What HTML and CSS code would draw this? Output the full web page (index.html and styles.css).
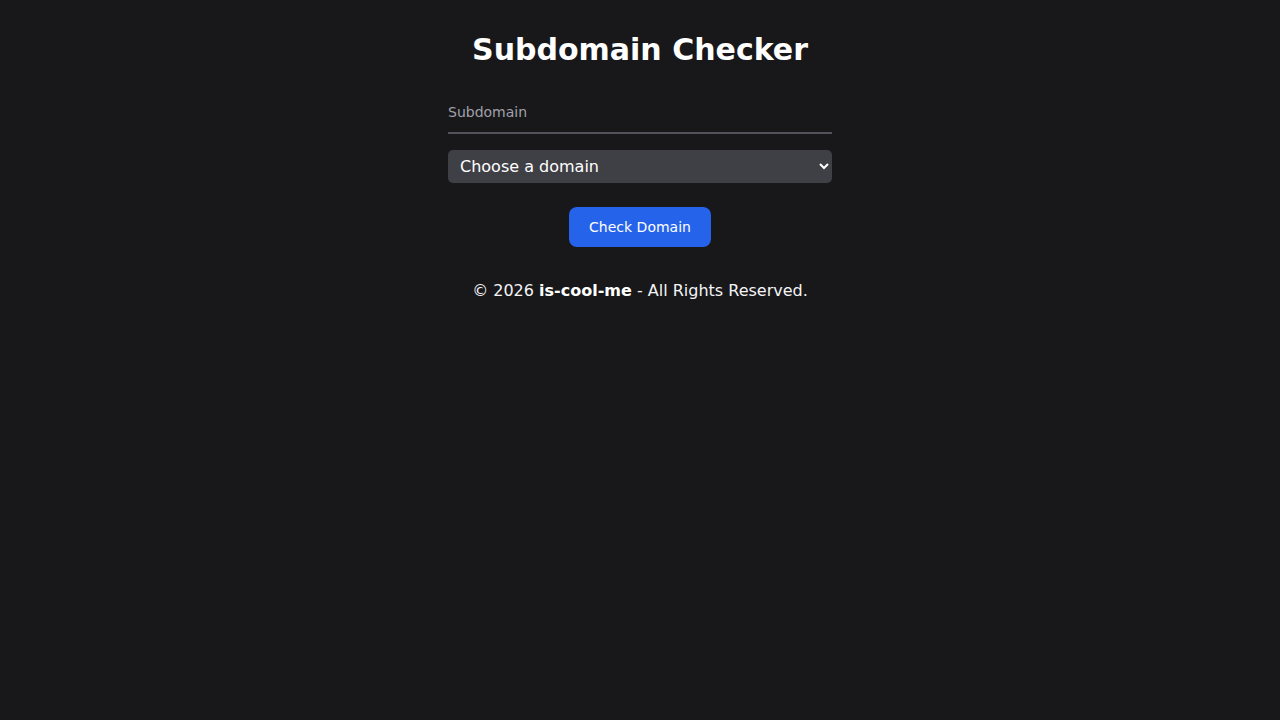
FILE: index.html
```html
<!DOCTYPE html>
<html lang="en">
<head>
<meta charset="utf-8">
<title>Subdomain Checker</title>
<link rel="stylesheet" href="styles.css">
</head>
<body>
<main class="container">
  <h1 class="title">Subdomain Checker</h1>
  <form class="form" onsubmit="return false">
    <input class="sub-input" type="text" placeholder="Subdomain">
    <select class="domain-select">
      <option>Choose a domain</option>
    </select>
    <div class="btn-row">
      <button class="check-btn" type="submit">Check Domain</button>
    </div>
  </form>
  <footer class="footer">© 2026 <strong>is-cool-me</strong> - All Rights Reserved.</footer>
</main>
</body>
</html>
```

FILE: styles.css
```css
html, body {
  margin: 0;
  padding: 0;
  background: #18181b;
  color: #ffffff;
  font-family: "DejaVu Sans", sans-serif;
  height: 100%;
}
.container {
  width: 384px;
  margin: 0 auto;
  padding-top: 32px;
  display: flex;
  flex-direction: column;
}
.title {
  margin: 0;
  font-size: 30px;
  line-height: 36px;
  font-weight: bold;
  text-align: center;
  color: #ffffff;
}
.form {
  margin-top: 24px;
  display: flex;
  flex-direction: column;
}
.sub-input {
  box-sizing: border-box;
  width: 100%;
  height: 42px;
  padding: 10px 0;
  border: none;
  border-bottom: 2px solid #52525b;
  background: transparent;
  color: #ffffff;
  font-family: "DejaVu Sans", sans-serif;
  font-size: 14px;
  line-height: 20px;
  outline: none;
}
.sub-input::placeholder {
  color: #a1a1aa;
}
.domain-select {
  box-sizing: border-box;
  margin-top: 16px;
  width: 100%;
  height: 33px;
  padding: 0 8px 0 8px;
  border: none;
  border-radius: 5px;
  background-color: #3f3f46;
  color: #ffffff;
  font-family: "DejaVu Sans", sans-serif;
  font-size: 16px;
  color-scheme: dark;
}
.btn-row {
  margin-top: 24px;
  display: flex;
  justify-content: center;
}
.check-btn {
  height: 40px;
  padding: 0 20px;
  border: none;
  border-radius: 8px;
  background: #2563eb;
  color: #ffffff;
  font-family: "DejaVu Sans", sans-serif;
  font-size: 14px;
  cursor: pointer;
}
.footer {
  margin-top: 32px;
  text-align: center;
  font-size: 16px;
  line-height: 24px;
  color: #f4f4f5;
}
.footer strong {
  font-weight: bold;
  color: #ffffff;
}
```
